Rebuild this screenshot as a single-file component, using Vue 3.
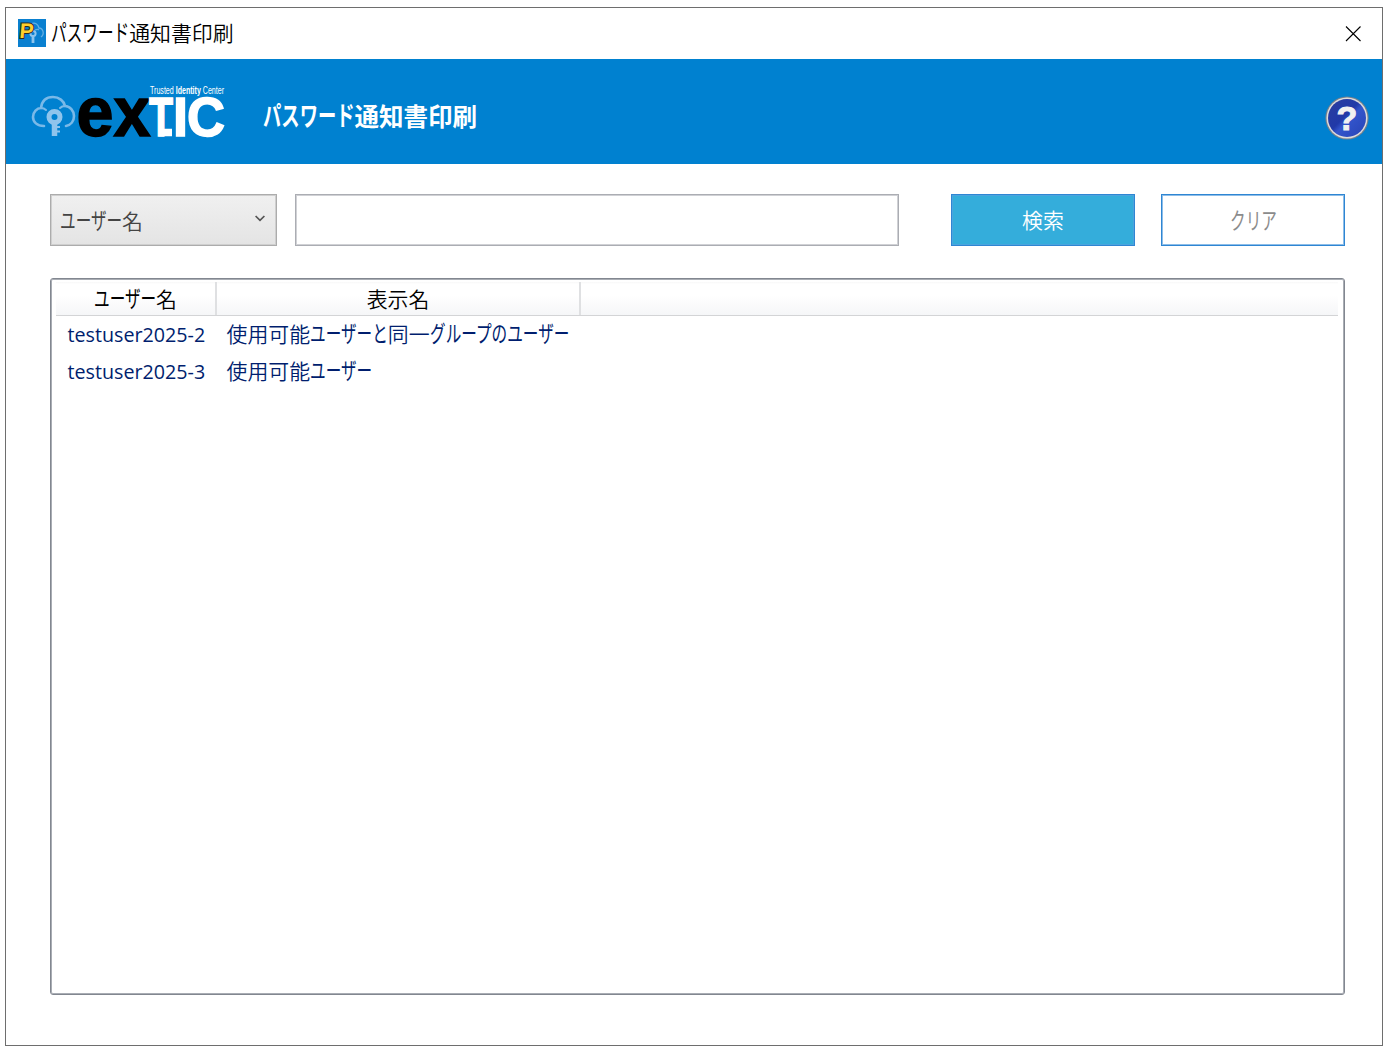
<template>
    <div class="window">
        <div class="title-bar">
            <svg class="app-icon" viewBox="0 0 28 28">
                <rect width="28" height="28" fill="#0a80d0" />
                <path d="M13 5c4-2 7 0 8 4 4 0 6 6 2 9M17 11c2-1 3-1 4 0" fill="none" stroke="#63afe4" stroke-width="1.300" />
                <circle cx="15" cy="14.500" r="2.600" fill="none" stroke="#8fc4ec" stroke-width="2" />
                <path d="M15 17v7" stroke="#8fc4ec" stroke-width="2.800" />
                <text x="2.500" y="18.500" transform="skewX(-5)" class="icon-letter">P</text>
            </svg>
            <span class="title"><span v-for="(run, i) in split(appTitle)" :key="i" :class="{ kana: run.kana }" :style="{ '--n': run.text.length }">{{ run.text }}</span></span>
            <svg class="close" viewBox="0 0 16 16">
                <path d="M1 0.500l14.500 14.500M15.500 0.500l-14.500 14.500" stroke="#000" stroke-width="1.100" />
            </svg>
        </div>

        <div class="header">
            <svg class="logo" viewBox="0 0 200 60">
                <g fill="none" stroke="#79b9e8" stroke-width="2.600" stroke-linecap="round">
                    <path d="M12 46c-7 0-11-4-11-9 0-5 4-9 8-9 1-8 6-11 12-11 6 0 11 4 12 9 5 0 9 5 9 10 0 5-3 9-8 10" />
                    <path d="M9 28c2 0 4 1 5 2M33 26c-2 0-4 1-5 2" stroke-width="2" />
                </g>
                <circle cx="22.500" cy="37" r="5.500" fill="none" stroke="#8fc4ec" stroke-width="5" />
                <path d="M22.500 43v13" fill="none" stroke="#8fc4ec" stroke-width="5.500" />
                <path d="M25 47h3M25 51.500h3" stroke="#8fc4ec" stroke-width="2" />
                <text x="118" y="13.500" class="tagline" textLength="74" lengthAdjust="spacingAndGlyphs">Trusted <tspan class="tag-bold">Identity</tspan> Center</text>
                <text x="44.500" y="56" class="logo-ex" textLength="74" lengthAdjust="spacingAndGlyphs">ex</text>
                <g class="logo-tic">
                    <path d="M127 52.500h13" stroke-width="7.500" />
                    <text x="117" y="56" textLength="24" lengthAdjust="spacingAndGlyphs">T</text>
                    <text x="141" y="56" textLength="15" lengthAdjust="spacingAndGlyphs">I</text>
                    <text x="155" y="56" textLength="38" lengthAdjust="spacingAndGlyphs">C</text>
                </g>
            </svg>
            <h1><span v-for="(run, i) in split(appTitle)" :key="i" :class="{ kana: run.kana }" :style="{ '--n': run.text.length }">{{ run.text }}</span></h1>
            <svg class="help" viewBox="0 0 44 44">
                <defs>
                    <linearGradient id="ball" x1="0" y1="0" x2="1" y2="1">
                        <stop offset="0" stop-color="#2a3f9f" />
                        <stop offset="0.450" stop-color="#2139a8" />
                        <stop offset="0.550" stop-color="#3355cc" />
                        <stop offset="1" stop-color="#2743b5" />
                    </linearGradient>
                </defs>
                <circle cx="22" cy="22" r="21.600" fill="#77808c" />
                <circle cx="22" cy="22" r="20.500" fill="#dcdcdc" />
                <circle cx="22" cy="22" r="19" fill="url(#ball)" />
                <text x="22" y="34" text-anchor="middle" class="help-mark">?</text>
            </svg>
        </div>

        <div class="content">
            <div class="search-row">
                <div class="select">
                    <span><span v-for="(run, i) in split('ユーザー名')" :key="i" :class="{ kana: run.kana }" :style="{ '--n': run.text.length }">{{ run.text }}</span></span>
                    <svg class="chevron" viewBox="0 0 10 7">
                        <path d="M0.600 1l4.400 4.400L9.400 1" fill="none" stroke="#555" stroke-width="1.700" />
                    </svg>
                </div>
                <input v-model="keyword" class="keyword" type="text">
                <button class="btn search">検索</button>
                <button class="btn clear" @click="keyword = ''"><span class="kana" :style="{ '--n': 3 }">クリア</span></button>
            </div>

            <div class="list">
                <div class="list-head">
                    <div v-for="label in columns" :key="label" class="head-cell">
                        <span><span v-for="(run, i) in split(label)" :key="i" :class="{ kana: run.kana }" :style="{ '--n': run.text.length }">{{ run.text }}</span></span>
                    </div>
                </div>
                <div v-for="user in users" :key="user.id" class="list-row">
                    <div class="user-id">{{ user.id }}</div>
                    <div class="user-name"><span v-for="(run, i) in split(user.name)" :key="i" :class="{ kana: run.kana }" :style="{ '--n': run.text.length }">{{ run.text }}</span></div>
                </div>
            </div>
        </div>
    </div>
</template>

<script setup>
import { ref } from 'vue';

const appTitle = 'パスワード通知書印刷';
const keyword = ref('');
const columns = ['ユーザー名', '表示名'];
const users = [
    { id: 'testuser2025-2', name: '使用可能ユーザーと同一グループのユーザー' },
    { id: 'testuser2025-3', name: '使用可能ユーザー' }
];

// kana runs are set condensed, kanji keep their full width
const split = (text) =>
    (text.match(/[\u3040-\u30ff]+|[^\u3040-\u30ff]+/g) || []).map((part) => ({
        text: part,
        kana: /[\u3040-\u30ff]/.test(part)
    }));
</script>

<style>
body {
    margin: 0;
    background: #ffffff;
}
</style>

<style scoped>
.window {
    box-sizing: border-box;
    width: 1378px;
    height: 1039px;
    margin: 7px 0 0 5px;
    border: 1px solid #6e6e6e;
    background: #ffffff;
    font-family: 'Noto Sans CJK JP', sans-serif;
    font-size: 20.9px;
    font-weight: 350;
    line-height: 30px;
    white-space: nowrap;
    overflow: hidden;
}

.kana {
    display: inline-block;
    font-size: 1.1em;
    font-weight: 400;
    transform: scaleX(0.68);
    transform-origin: left;
    margin-right: calc(var(--n) * -0.32em);
}

.title-bar {
    display: flex;
    align-items: center;
    height: 51px;
    padding: 0 21px 0 12px;
}

.app-icon {
    width: 28px;
    height: 28px;
    margin: -2px 5px 0 0;
}

.icon-letter {
    font: bold 21px 'Liberation Sans', sans-serif;
    fill: #ffcf2c;
    stroke: #2b2b20;
    stroke-width: 2px;
    paint-order: stroke;
}

.title {
    flex: 1;
    padding-bottom: 4px;
}

.close {
    width: 16px;
    height: 16px;
}

.header {
    display: flex;
    align-items: center;
    box-sizing: border-box;
    height: 105px;
    padding: 0 13px 0 26px;
    background: #0081d0;
}

.logo {
    width: 200px;
    height: 60px;
    margin: -3px 31px 0 0;
    overflow: visible;
}

.tagline {
    font: 10px 'Liberation Sans', sans-serif;
    fill: #ffffff;
}

.tag-bold {
    font-weight: bold;
}

.logo-ex {
    font: bold 71px 'Liberation Sans', sans-serif;
    fill: #000000;
    stroke: #000000;
    stroke-width: 1.5px;
}

.logo-tic {
    font: bold 55px 'Liberation Sans', sans-serif;
    fill: #ffffff;
    stroke: #ffffff;
    stroke-width: 1.5px;
}

h1 {
    flex: 1;
    margin: 0;
    padding-top: 7px;
    color: #ffffff;
    font-size: 24.5px;
    font-weight: bold;
}

h1 .kana {
    font-weight: bold;
}

.help {
    width: 44px;
    height: 44px;
    margin-top: 12px;
}

.help-mark {
    font: bold 34px 'Liberation Sans', sans-serif;
    fill: #f1f1f1;
    stroke: #f1f1f1;
    stroke-width: 1px;
}

.content {
    padding: 30px 37px 0 44px;
}

.search-row {
    display: flex;
    height: 52px;
    margin-bottom: 32px;
}

.select {
    display: flex;
    align-items: center;
    justify-content: space-between;
    box-sizing: border-box;
    width: 227px;
    margin-right: 18px;
    padding: 0 11px 2px 9px;
    border: 1px solid #acacac;
    box-shadow: inset 0 0 0 1px #cfcfcf;
    background: linear-gradient(#f0f0f0, #e4e4e4);
    color: #444444;
}

.chevron {
    width: 10px;
    height: 7px;
    margin-top: -1px;
}

.keyword {
    box-sizing: border-box;
    width: 604px;
    margin-right: 52px;
    padding: 0 8px;
    border: 1px solid #abadb3;
    box-shadow: inset 0 0 0 1px #d0d1d5;
    background: #ffffff;
    font: inherit;
    outline: none;
}

.btn {
    box-sizing: border-box;
    width: 184px;
    padding: 0 0 2px;
    border: 1px solid #2f86d3;
    font: inherit;
}

.search {
    margin-right: 26px;
    background: #34addb;
    box-shadow: inset 0 0 0 1px #4ba4dd;
    color: #ffffff;
}

.clear {
    background: #ffffff;
    box-shadow: inset 0 0 0 1px #8dbde8;
    color: #8b8b8b;
}

.list {
    box-sizing: border-box;
    width: 1295px;
    height: 717px;
    padding: 3px 6px 0 4px;
    border: 1px solid #828790;
    border-radius: 3px;
    box-shadow: inset 0 0 0 1px #a9adb4;
}

.list-head {
    display: grid;
    grid-template-columns: 161px 364px;
    height: 33px;
    margin: 0 0 -1px 1px;
    border-bottom: 1px solid #d3d4d6;
    background: linear-gradient(#f8f8f8 0, #ffffff 2px, #ffffff 40%, #f5f6f8);
}

.head-cell {
    display: flex;
    align-items: center;
    justify-content: center;
    padding-bottom: 2px;
    border-right: 2px solid #dfe0e2;
    color: #000000;
}

.list-row {
    display: grid;
    grid-template-columns: 159px 1fr;
    align-items: center;
    height: 37px;
    padding-left: 12.5px;
    color: #001e6e;
}

.list-row:nth-child(2) {
    margin-top: 1px;
}

.user-name {
    padding-bottom: 5px;
}

.user-id {
    font-family: 'Open Sans', sans-serif;
    font-size: 19.7px;
    font-weight: 400;
}
</style>
